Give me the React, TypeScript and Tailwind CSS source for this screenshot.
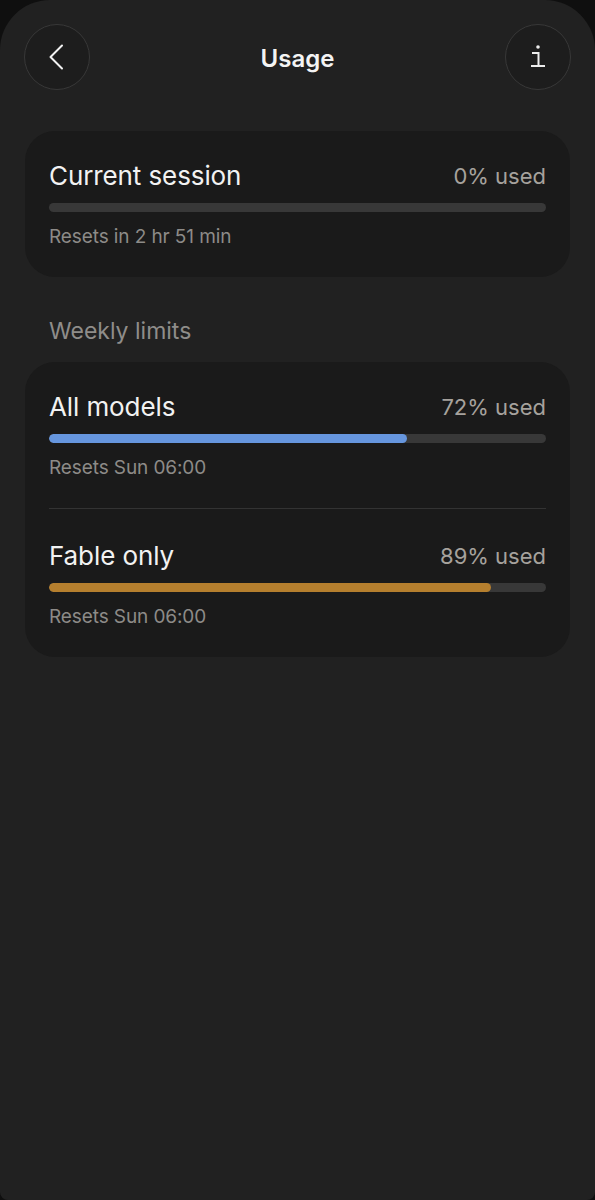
import React from "react";

const font = { fontFamily: "Inter, 'Noto Sans', sans-serif" };

function Bar({ pct, color }: { pct: number; color?: string }) {
  return (
    <div className="h-[9px] w-full rounded-full bg-[#383838] overflow-hidden">
      {color ? (
        <div className={`h-full rounded-full ${color}`} style={{ width: `${pct}%` }} />
      ) : null}
    </div>
  );
}

function Row({
  label,
  pct,
  reset,
  color,
}: {
  label: string;
  pct: number;
  reset: string;
  color?: string;
}) {
  return (
    <div className="flex flex-col">
      <div className="flex items-center justify-between h-[30px]">
        <span className="text-[26px] leading-[30px] text-[#f2f2f2] tracking-[-0.1px]">{label}</span>
        <span className="text-[22px] leading-[30px] text-[#a6a29d]">{pct}% used</span>
      </div>
      <div className="mt-[12px]">
        <Bar pct={pct} color={color} />
      </div>
      <div className="mt-[13px] text-[19px] leading-[24px] text-[#8d8b88] tracking-[-0.1px]">{reset}</div>
    </div>
  );
}

export default function App() {
  return (
    <div className="w-full h-[1200px] bg-[#0f0f0f]" style={font}>
      <div className="h-[1200px] bg-[#212121] rounded-t-[50px] rounded-b-[8px] flex flex-col">
        <div className="flex items-center justify-between px-[24px] pt-[24px]">
          <div className="w-[66px] h-[66px] rounded-full border border-[#383838] bg-[#1d1d1d] flex items-center justify-center">
            <svg width="16" height="26" viewBox="0 0 16 26" className="-ml-[3px]">
              <path d="M14 1.5 L2.5 13 L14 24.5" fill="none" stroke="#f2f2f2" strokeWidth="2" strokeLinecap="round" strokeLinejoin="round" />
            </svg>
          </div>
          <div className="text-[24px] font-semibold text-[#f4f4f4] leading-[30px] mt-[3px]">Usage</div>
          <div className="w-[66px] h-[66px] rounded-full border border-[#383838] bg-[#1d1d1d] flex items-center justify-center">
            <svg width="18" height="26" viewBox="0 0 18 26">
              <circle cx="9" cy="3" r="1.8" fill="#ececec" />
              <path d="M3 9 H9.5 V22" fill="none" stroke="#ececec" strokeWidth="2" />
              <path d="M2 22 H16" fill="none" stroke="#ececec" strokeWidth="2" />
            </svg>
          </div>
        </div>

        <div className="mx-[25px] mt-[41px] rounded-[30px] bg-[#1a1a1a] px-[24px] pt-[30px] pb-[28px]">
          <Row label="Current session" pct={0} reset="Resets in 2 hr 51 min" />
        </div>

        <div className="px-[49px] mt-[40px] text-[23px] leading-[28px] text-[#8f8d8a]">Weekly limits</div>

        <div className="mx-[25px] mt-[17px] rounded-[30px] bg-[#1a1a1a] px-[24px] pt-[30px] pb-[28px]">
          <Row label="All models" pct={72} reset="Resets Sun 06:00" color="bg-[#6696de]" />
          <div className="mt-[28px] mb-[32px] h-px bg-[#333333]" />
          <Row label="Fable only" pct={89} reset="Resets Sun 06:00" color="bg-[#b57f2e]" />
        </div>
      </div>
    </div>
  );
}
